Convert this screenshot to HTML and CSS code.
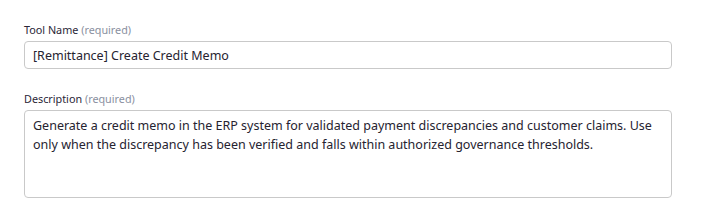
FILE: index.html
```html
<!DOCTYPE html>
<html lang="en">
  <head>
    <meta charset="UTF-8" />
    <meta name="viewport" content="width=device-width, initial-scale=1.0" />
    <title>Tool Settings</title>
    <link rel="stylesheet" href="styles.css">
  </head>
  <body>
    <form class="tool-form">
      <!-- Nombre de la herramienta -->
      <div class="field">
        <label class="field-label" for="tool-name">Tool Name <span class="required">(required)</span></label>
        <input id="tool-name" class="field-input" type="text" value="[Remittance] Create Credit Memo" />
      </div>

      <!-- Descripción -->
      <div class="field">
        <label class="field-label" for="tool-desc">Description <span class="required">(required)</span></label>
        <textarea id="tool-desc" class="field-textarea">Generate a credit memo in the ERP system for validated payment discrepancies and customer claims. Use only when the discrepancy has been verified and falls within authorized governance thresholds.</textarea>
      </div>
    </form>
  </body>
</html>
```

FILE: styles.css
```css
body {
  margin: 0;
  background-color: #ffffff;
  font-family: "Noto Sans", "Open Sans", sans-serif;
}

.tool-form {
  display: flex;
  flex-direction: column;
  gap: 22px;
  width: 648px;
  padding: 22px 0 0 24px;
}

.field {
  display: flex;
  flex-direction: column;
  gap: 4px;
}

.field-label {
  font-size: 10.8px;
  line-height: 15px;
  color: #2b2637;
}

.required {
  color: #8a90a0;
}

.field-input,
.field-textarea {
  box-sizing: border-box;
  width: 100%;
  border: 1px solid #c9c9c9;
  border-radius: 4px;
  font-family: "Noto Sans", "Open Sans", sans-serif;
  font-size: 12.5px;
  color: #262330;
  background-color: #ffffff;
  margin: 0;
}

.field-input {
  height: 28px;
  padding: 0 8px;
}

.field-textarea {
  height: 88px;
  padding: 6px 8px;
  line-height: 18.5px;
  resize: none;
  overflow: hidden;
}
```
